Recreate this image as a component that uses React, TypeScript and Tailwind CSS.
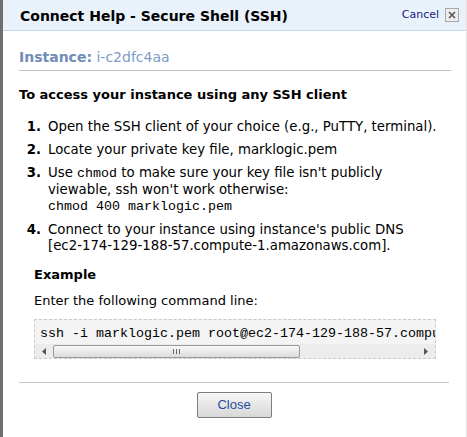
import React from "react";

const sans = { fontFamily: '"DejaVu Sans", Verdana, sans-serif' };
const mono = { fontFamily: '"Liberation Mono", "Courier New", monospace' };

function Item({ n, children }: { n: string; children: React.ReactNode }) {
  return (
    <div className="flex">
      <div className="w-[29px] shrink-0 text-right pr-[7px] font-bold">{n}</div>
      <div>{children}</div>
    </div>
  );
}

export default function App() {
  return (
    <div
      className="w-[467px] h-[437px] bg-white text-black border-l-[3px] border-l-[#6e6e6e] border-r border-r-[#e4e4e4] relative overflow-hidden"
      style={sans}
    >
      <div className="h-[31px] bg-[#e9f1fb] border-b border-[#c3d8ef] flex items-center pl-[17px] pr-[7px]">
        <div className="text-[14px] font-bold leading-none flex-1 pt-[1px]">
          Connect Help - Secure Shell (SSH)
        </div>
        <div className="text-[11px] text-[#1a1a80] mr-[6px]">Cancel</div>
        <div className="w-[14px] h-[14px] border border-[#a8a8a8] bg-[#eeeeee] flex items-center justify-center">
          <svg width="8" height="8" viewBox="0 0 8 8">
            <path d="M1 1 L7 7 M7 1 L1 7" stroke="#555" strokeWidth="1.6" />
          </svg>
        </div>
      </div>

      <div className="pl-[16px] pr-[13px]">
        <div className="mt-[17px] pb-[4px] border-b border-[#c2c2c2] text-[14px] leading-[18px] text-[#7b9bc8] w-[432px]">
          <span className="font-bold text-[#6f8db5]">Instance:</span> i-c2dfc4aa
        </div>

        <div className="mt-[16px] text-[13px] font-bold leading-[16px]">
          To access your instance using any SSH client
        </div>

        <div className="mt-[16px] text-[13.3px] leading-[16px] flex flex-col gap-[7px]">
          <Item n="1.">Open the SSH client of your choice (e.g., PuTTY, terminal).</Item>
          <Item n="2.">Locate your private key file, marklogic.pem</Item>
          <Item n="3.">
            Use <span className="text-[13.33px]" style={mono}>chmod</span> to make sure your key file isn't publicly
            <br />
            viewable, ssh won't work otherwise:
            <br />
            <span className="text-[13.33px]" style={mono}>chmod 400 marklogic.pem</span>
          </Item>
          <Item n="4.">
            Connect to your instance using instance's public DNS
            <br />
            [ec2-174-129-188-57.compute-1.amazonaws.com].
          </Item>
        </div>

        <div className="ml-[15px]">
          <div className="mt-[13px] text-[13px] font-bold leading-[16px]">Example</div>
          <div className="mt-[10px] text-[13px] leading-[16px]">Enter the following command line:</div>
          <div className="mt-[10px] w-[402px] border border-dashed border-[#c8c8c8] bg-[#f4f4f4] pt-[6px] overflow-hidden">
            <div className="pl-[5px] whitespace-nowrap text-[13.33px] leading-[16px]" style={mono}>
              ssh -i marklogic.pem root@ec2-174-129-188-57.compu
            </div>
            <div className="mt-[2px] h-[14px] flex items-center bg-[#ececec]">
              <div className="w-[18px] flex justify-center">
                <svg width="4" height="7" viewBox="0 0 4 7">
                  <path d="M4 0 L0 3.5 L4 7 Z" fill="#555" />
                </svg>
              </div>
              <div className="w-[247px] h-[13px] rounded-[2px] border border-[#9a9a9a] bg-gradient-to-b from-[#f8f8f8] to-[#dcdcdc] flex items-center justify-center">
                <svg width="7" height="5" viewBox="0 0 7 5">
                  <path d="M0.5 0 V5 M3.5 0 V5 M6.5 0 V5" stroke="#666" strokeWidth="1" />
                </svg>
              </div>
              <div className="flex-1" />
              <div className="w-[18px] flex justify-center">
                <svg width="4" height="7" viewBox="0 0 4 7">
                  <path d="M0 0 L4 3.5 L0 7 Z" fill="#555" />
                </svg>
              </div>
            </div>
          </div>
        </div>

        <div className="mt-[23px] w-[430px] border-t border-[#c8c8c8]" />
        <div className="flex justify-center w-[430px] mt-[9px]">
          <div
            className="w-[75px] h-[26px] border border-[#7d7d7d] rounded-[2px] bg-gradient-to-b from-[#f7f7f7] via-[#e6e6e6] to-[#d8d8d8] text-[#1f4e9c] flex items-center justify-center"
            style={{ fontFamily: '"Liberation Sans", Arial, sans-serif', fontSize: "13px" }}
          >
            Close
          </div>
        </div>
      </div>
    </div>
  );
}
